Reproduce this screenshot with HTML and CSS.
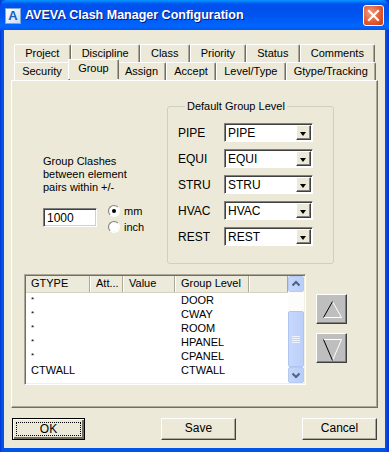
FILE: index.html
```html
<!DOCTYPE html>
<html>
  <head>
    <meta http-equiv="Content-Type" content="text/html;charset=utf-8" />
    <title>AVEVA Clash Manager Configuration</title>
    <link rel="stylesheet" href="styles.css">
  </head>

  <body>
    <div class="window">
      <!-- Title bar -->
      <div class="titlebar">
        <span class="app-icon">A</span>
        <span class="title">AVEVA Clash Manager Configuration</span>
        <span class="close-btn">
          <svg width="21" height="21" viewBox="0 0 21 21">
            <path d="M6 6 L15 15 M15 6 L6 15" stroke="#fff" stroke-width="2.2" stroke-linecap="square" />
          </svg>
        </span>
      </div>

      <div class="client">
        <!-- Tabs -->
        <div class="tabs">
          <div class="tab-row">
            <div class="tab">Project</div>
            <div class="tab">Discipline</div>
            <div class="tab">Class</div>
            <div class="tab">Priority</div>
            <div class="tab">Status</div>
            <div class="tab">Comments</div>
          </div>
          <div class="tab-row front">
            <div class="tab">Security</div>
            <div class="tab active">Group</div>
            <div class="tab">Assign</div>
            <div class="tab">Accept</div>
            <div class="tab">Level/Type</div>
            <div class="tab">Gtype/Tracking</div>
          </div>
        </div>

        <div class="panel">
          <div class="top-section">
            <div class="tolerance">
              <p class="tol-text">Group Clashes<br />between element<br />pairs within +/-</p>
              <div class="tol-inputs">
                <div class="textbox">1000</div>
                <div class="units">
                  <div class="radio-row"><span class="radio checked"></span>mm</div>
                  <div class="radio-row"><span class="radio"></span>inch</div>
                </div>
              </div>
            </div>

            <fieldset class="group-box">
              <legend>Default Group Level</legend>
              <div class="level-row">
                <span class="level-label">PIPE</span>
                <div class="combo"><span class="combo-text">PIPE</span><span class="combo-btn"></span></div>
              </div>
              <div class="level-row">
                <span class="level-label">EQUI</span>
                <div class="combo"><span class="combo-text">EQUI</span><span class="combo-btn"></span></div>
              </div>
              <div class="level-row">
                <span class="level-label">STRU</span>
                <div class="combo"><span class="combo-text">STRU</span><span class="combo-btn"></span></div>
              </div>
              <div class="level-row">
                <span class="level-label">HVAC</span>
                <div class="combo"><span class="combo-text">HVAC</span><span class="combo-btn"></span></div>
              </div>
              <div class="level-row">
                <span class="level-label">REST</span>
                <div class="combo"><span class="combo-text">REST</span><span class="combo-btn"></span></div>
              </div>
            </fieldset>
          </div>

          <div class="bottom-section">
            <div class="listview">
              <div class="list-body">
                <div class="list-header">
                  <span class="col col-gtype">GTYPE</span>
                  <span class="col col-att">Att...</span>
                  <span class="col col-value">Value</span>
                  <span class="col col-level">Group Level</span>
                  <span class="col col-fill"></span>
                </div>
                <div class="list-row"><span class="col col-gtype star">*</span><span class="col col-att"></span><span class="col col-value"></span><span class="col col-level">DOOR</span></div>
                <div class="list-row"><span class="col col-gtype star">*</span><span class="col col-att"></span><span class="col col-value"></span><span class="col col-level">CWAY</span></div>
                <div class="list-row"><span class="col col-gtype star">*</span><span class="col col-att"></span><span class="col col-value"></span><span class="col col-level">ROOM</span></div>
                <div class="list-row"><span class="col col-gtype star">*</span><span class="col col-att"></span><span class="col col-value"></span><span class="col col-level">HPANEL</span></div>
                <div class="list-row"><span class="col col-gtype star">*</span><span class="col col-att"></span><span class="col col-value"></span><span class="col col-level">CPANEL</span></div>
                <div class="list-row"><span class="col col-gtype">CTWALL</span><span class="col col-att"></span><span class="col col-value"></span><span class="col col-level">CTWALL</span></div>
              </div>
              <div class="scrollbar">
                <div class="sb-btn">
                  <svg width="14" height="14" viewBox="0 0 14 14"><path d="M3.5 8.5 L7 5 L10.5 8.5" fill="none" stroke="#4D6185" stroke-width="2" /></svg>
                </div>
                <div class="sb-track"></div>
                <div class="sb-thumb">
                  <svg width="8" height="7" viewBox="0 0 8 7"><path d="M0 0.5 H8 M0 2.5 H8 M0 4.5 H8 M0 6.5 H8" stroke="#EEF4FE" stroke-width="1" /></svg>
                </div>
                <div class="sb-btn">
                  <svg width="14" height="14" viewBox="0 0 14 14"><path d="M3.5 5.5 L7 9 L10.5 5.5" fill="none" stroke="#4D6185" stroke-width="2" /></svg>
                </div>
              </div>
            </div>

            <div class="move-buttons">
              <div class="move-btn">
                <svg width="29" height="28" viewBox="0 0 29 28">
                  <path d="M6.5 22.5 L24.5 22.5 L15.5 6.5" fill="none" stroke="#fff" stroke-width="1" />
                  <path d="M6.5 22.5 L15.5 6.5" fill="none" stroke="#000" stroke-width="1" />
                </svg>
              </div>
              <div class="move-btn">
                <svg width="29" height="28" viewBox="0 0 29 28">
                  <path d="M6.5 5.5 L24.5 5.5 L15.5 26.5" fill="none" stroke="#fff" stroke-width="1" />
                  <path d="M6.5 5.5 L15.5 26.5" fill="none" stroke="#000" stroke-width="1" />
                </svg>
              </div>
            </div>
          </div>
        </div>

        <!-- Dialog buttons -->
        <div class="dialog-buttons">
          <div class="btn default"><span class="focus-rect">OK</span></div>
          <div class="btn btn-save">Save</div>
          <div class="btn">Cancel</div>
        </div>
      </div>
    </div>
  </body>
</html>
```

FILE: styles.css
```css
body {
  margin: 0;
  font-family: "Liberation Sans", Arial, sans-serif;
  font-size: 11px;
  color: #000;
}

.window {
  width: 389px;
  height: 452px;
  box-sizing: border-box;
  background: linear-gradient(to right, #0831D9 0, #0055E5 2px, #0055E5 385px, #0831D9 389px);
  display: flex;
  flex-direction: column;
}

/* Title bar */
.titlebar {
  height: 30px;
  flex: none;
  display: flex;
  align-items: center;
  padding: 0 5px 0 5px;
  border-radius: 7px 7px 0 0;
  background: linear-gradient(to bottom, #0997FF 0, #0053EE 4px, #0050EE 8px, #0055F0 16px, #0066FF 26px, #0058EE 30px);
}

.app-icon {
  width: 16px;
  height: 16px;
  box-sizing: border-box;
  background: linear-gradient(135deg, #FFFFFF, #C9DCF5);
  border: 1px solid #7FA6D9;
  color: #1C5DB8;
  font-weight: bold;
  font-size: 13px;
  line-height: 14px;
  text-align: center;
  margin-top: 1px;
}

.title {
  margin-left: 4px;
  flex: 1;
  color: #fff;
  font-weight: bold;
  font-size: 12.5px;
  text-shadow: 1px 1px #0A1883;
}

.close-btn {
  width: 21px;
  height: 21px;
  box-sizing: border-box;
  border: 1px solid #fff;
  border-radius: 3px;
  background: radial-gradient(circle at 35% 35%, #F09A7E, #E2562C 60%, #C63D12);
}

.close-btn svg {
  display: block;
  margin: -1px;
}

/* Client area */
.client {
  flex: 1;
  margin: 0 4px 4px;
  background-color: #ECE9D8;
  padding: 14px 7px 8px 7px;
}

/* Tabs */
.tabs {
  padding: 0 2px 0 3px;
}

.tab-row {
  display: flex;
  height: 18px;
  padding-right: 1px;
}

.tab-row.front {
  padding-right: 0;
}

.tab {
  flex: 1 1 auto;
  text-align: center;
  line-height: 16px;
  border-top: 1px solid #FFFFFF;
  border-left: 1px solid #FFFFFF;
  border-right: 1px solid #716F64;
  box-shadow: inset -1px 0 #ACA899;
  border-radius: 2px 2px 0 0;
  padding: 0 4px;
  background-color: #ECE9D8;
}

.tab.active {
  position: relative;
  margin: -3px -2px 0 -2px;
  line-height: 17px;
  z-index: 1;
  height: 20px;
  padding: 0 6px;
  box-sizing: border-box;
}

/* Panel */
.panel {
  height: 328px;
  box-sizing: border-box;
  border-top: 1px solid #FFFFFF;
  border-left: 1px solid #FFFFFF;
  border-right: 1px solid #716F64;
  border-bottom: 1px solid #716F64;
  box-shadow: inset -1px -1px #ACA899;
  padding: 19px 0 0 0;
}

.top-section {
  display: flex;
  padding-left: 31px;
}

.tolerance {
  width: 124px;
  padding-top: 55px;
}

.tol-text {
  margin: 0;
  line-height: 13px;
}

.tol-inputs {
  display: flex;
  margin-top: 14px;
}

.textbox {
  width: 54px;
  height: 19px;
  box-sizing: border-box;
  background: #fff;
  border-top: 1px solid #808080;
  border-left: 1px solid #808080;
  border-right: 1px solid #FFFFFF;
  border-bottom: 1px solid #FFFFFF;
  box-shadow: inset 1px 1px #404040, inset -1px -1px #D4D0C8;
  padding: 2px 3px;
  line-height: 14px;
  font-size: 12px;
}

.units {
  margin-left: 11px;
  margin-top: -5px;
}

.radio-row {
  display: flex;
  align-items: center;
  height: 16px;
}

.radio {
  width: 12px;
  height: 12px;
  box-sizing: border-box;
  border-radius: 50%;
  border: 1px solid;
  border-color: #808080 #FFFFFF #FFFFFF #808080;
  background: radial-gradient(circle, #FFFFFF 55%, #E4E2D8);
  margin-right: 4px;
  position: relative;
}

.radio.checked::after {
  content: "";
  position: absolute;
  left: 3px;
  top: 3px;
  width: 4px;
  height: 4px;
  border-radius: 50%;
  background: #000;
}

.group-box {
  width: 167px;
  box-sizing: border-box;
  margin: 0;
  padding: 10px 0 17px 10px;
  border: 1px solid #D0D0BF;
  border-radius: 3px;
  min-width: 0;
}

.group-box legend {
  margin-left: 7px;
  padding: 0 2px;
  line-height: 13px;
}

.level-row {
  display: flex;
  align-items: center;
  height: 19px;
  margin-bottom: 7px;
}

.level-row:last-child {
  margin-bottom: 0;
}

.level-label {
  width: 46px;
  font-size: 12px;
}

.combo {
  width: 89px;
  height: 19px;
  box-sizing: border-box;
  display: flex;
  background: #fff;
  border-top: 1px solid #808080;
  border-left: 1px solid #808080;
  border-right: 1px solid #FFFFFF;
  border-bottom: 1px solid #FFFFFF;
  box-shadow: inset 1px 1px #404040;
}

.combo-text {
  flex: 1;
  padding: 2px 0 0 3px;
  font-size: 12px;
  line-height: 14px;
}

.combo-btn {
  width: 15px;
  margin: 1px 1px 1px 0;
  box-sizing: border-box;
  background-color: #ECE9D8;
  border-top: 1px solid #FFFFFF;
  border-left: 1px solid #FFFFFF;
  border-right: 1px solid #404040;
  border-bottom: 1px solid #404040;
  box-shadow: inset -1px -1px #808080;
  position: relative;
}

.combo-btn::after {
  content: "";
  position: absolute;
  left: 3px;
  top: 6px;
  border-left: 3.5px solid transparent;
  border-right: 3.5px solid transparent;
  border-top: 4px solid #000;
}

/* List view */
.bottom-section {
  display: flex;
  align-items: flex-start;
  padding-left: 12px;
  margin-top: 10px;
}

.listview {
  width: 282px;
  height: 111px;
  box-sizing: border-box;
  display: flex;
  background: #fff;
  border-top: 1px solid #ACA899;
  border-left: 1px solid #ACA899;
  border-right: 1px solid #FFFFFF;
  border-bottom: 1px solid #FFFFFF;
  box-shadow: inset 1px 1px #716F64, inset -1px -1px #F1EFE2;
  padding: 1px;
}

.list-body {
  flex: 1;
  overflow: hidden;
}

.list-header {
  display: flex;
  height: 16px;
  background-color: #EBEADB;
  border-bottom: 1px solid #D6D2C2;
  line-height: 15px;
}

.list-header .col {
  border-right: 1px solid #ACA899;
  box-shadow: inset 1px 0 #FFFFFF;
}

.list-header .col:first-child {
  box-shadow: none;
}

.list-row {
  display: flex;
  height: 14px;
  line-height: 14px;
}

.col {
  box-sizing: border-box;
  padding-left: 6px;
  white-space: nowrap;
  overflow: hidden;
}

.col-gtype {
  width: 64px;
  padding-left: 5px;
}

.col-att {
  width: 33px;
}

.col-value {
  width: 52px;
}

.col-level {
  width: 74px;
}

.col-fill {
  flex: 1;
}

.star {
  font-size: 8px;
  padding-left: 5px;
}

.scrollbar {
  width: 16px;
  display: flex;
  flex-direction: column;
  background: #FCFCFA;
}

.sb-btn {
  height: 16px;
  box-sizing: border-box;
  border: 1px solid #B5CAF3;
  border-radius: 2px;
  background: linear-gradient(to right, #C6D6FA, #B9CEF8);
  display: flex;
  align-items: center;
  justify-content: center;
}

.sb-track {
  height: 19px;
}

.sb-thumb {
  flex: 1;
  box-sizing: border-box;
  border: 1px solid #AEC5F4;
  border-radius: 2px;
  background: linear-gradient(to right, #C8D8FC, #BBCFF9);
  display: flex;
  align-items: center;
  justify-content: center;
}

.move-buttons {
  margin-left: 10px;
  margin-top: 20px;
}

.move-btn {
  width: 31px;
  height: 30px;
  box-sizing: border-box;
  background-color: #BEBEBE;
  border-top: 1px solid #FFFFFF;
  border-left: 1px solid #FFFFFF;
  border-right: 1px solid #404040;
  border-bottom: 1px solid #404040;
  box-shadow: inset -1px -1px #808080;
  margin-bottom: 9px;
}

.move-btn svg {
  display: block;
}

/* Dialog buttons */
.dialog-buttons {
  display: flex;
  justify-content: space-between;
  margin-top: 10px;
  padding: 0 1px;
}

.btn {
  width: 75px;
  height: 22px;
  box-sizing: border-box;
  border-top: 1px solid #FFFFFF;
  border-left: 1px solid #FFFFFF;
  border-right: 1px solid #404040;
  border-bottom: 1px solid #404040;
  box-shadow: inset -1px -1px #ACA899;
  text-align: center;
  line-height: 19px;
  font-size: 12px;
  background-color: #ECE9D8;
}

.btn-save {
  margin-left: 10px;
}

.btn.default {
  width: 73px;
  border: 1px solid #000;
  box-shadow: inset 1px 1px #FFFFFF, inset -2px -2px #716F64;
  padding: 3px;
  line-height: 12px;
}

.focus-rect {
  display: block;
  height: 14px;
  box-sizing: border-box;
  border: 1px dotted #000;
  line-height: 12px;
}
```
